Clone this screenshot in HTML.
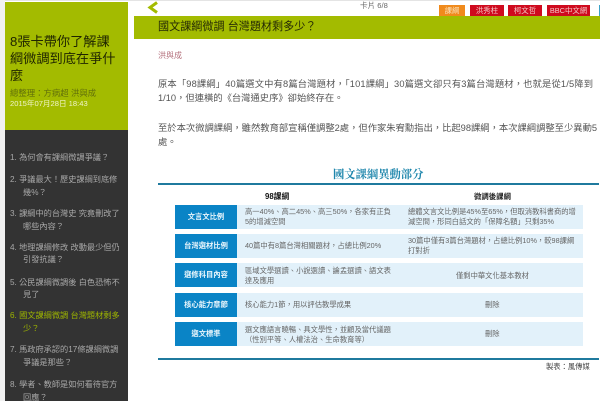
<!DOCTYPE html>
<html lang="zh-Hant">
<head>
<meta charset="utf-8">
<style>
html,body{margin:0;padding:0;width:600px;height:401px;overflow:hidden;background:#fff}
body{position:relative;font-family:"Liberation Sans","Noto Sans CJK TC",sans-serif}
#w{position:absolute;left:0;top:0;width:600px;height:401px;overflow:hidden;filter:blur(0.3px)}
.a{position:absolute;white-space:nowrap;display:block}
.b{position:absolute;display:block}
.m{font-size:8.2px;line-height:12px;color:#a8a8a8}
.t{font-size:9.3px;line-height:12px;color:#555}
.c{font-size:7.3px;line-height:9.5px;color:#666}
.l{position:absolute;left:175px;width:62px;height:24px;background:#0a84c6;color:#eaf6fc;font-size:7.3px;font-weight:bold;line-height:24px;text-align:center}
.r{position:absolute;left:237px;width:346px;height:24px;background:#e2f1fa}
.tab{position:absolute;top:5px;height:11px;background:#cf0a1e;color:#f4c8c8;font-size:7.4px;line-height:11px;text-align:center}
</style>
</head>
<body>
<div id="w">
<div class="b" style="left:0;top:0;width:600px;height:1px;background:#e4e4e4"></div>
<div class="b" style="left:0;top:0;width:5px;height:401px;background:#f1f1f1"></div>
<div class="b" style="left:5px;top:2px;width:123px;height:128px;background:#a3bb00"></div>
<div class="b" style="left:5px;top:130px;width:123px;height:271px;background:#333"></div>

<span class="a" style="left:10px;top:33px;font-size:13.2px;line-height:17px;color:#1f2400">8張卡帶你了解課<br>綱微調到底在爭什<br>麼</span>
<span class="a" style="left:10px;top:88px;font-size:8.4px;line-height:11px;color:#62700a">總整理：方病超 洪與成</span>
<span class="a" style="left:10px;top:99px;font-size:7.6px;line-height:10px;color:#f0f4c8">2015年07月28日 18:43</span>

<span class="a m" style="left:10px;top:152px">1. 為何會有課綱微調爭議？</span>
<span class="a m" style="left:10px;top:174px">2. 爭議最大！歷史課綱到底修</span>
<span class="a m" style="left:23px;top:187px">幾%？</span>
<span class="a m" style="left:10px;top:208px">3. 課綱中的台灣史 究竟刪改了</span>
<span class="a m" style="left:23px;top:221px">哪些內容？</span>
<span class="a m" style="left:10px;top:242px">4. 地理課綱修改 改動最少但仍</span>
<span class="a m" style="left:23px;top:254px">引發抗議？</span>
<span class="a m" style="left:10px;top:277px">5. 公民課綱微調後 白色恐怖不</span>
<span class="a m" style="left:23px;top:289px">見了</span>
<span class="a m" style="left:10px;top:310px;color:#9db400">6. 國文課綱微調 台灣題材剩多</span>
<span class="a m" style="left:23px;top:323px;color:#9db400">少？</span>
<span class="a m" style="left:10px;top:344px">7. 馬政府承認的17條課綱微調</span>
<span class="a m" style="left:23px;top:357px">爭議是那些？</span>
<span class="a m" style="left:10px;top:379px">8. 學者、教師是如何看待官方</span>
<span class="a m" style="left:23px;top:392px">回應？</span>

<svg class="b" style="left:146px;top:1px" width="14" height="13" viewBox="0 0 14 13"><path d="M11 1.5 L4 6.5 L11 11.5" fill="none" stroke="#a3bb00" stroke-width="3"/></svg>
<span class="a" style="left:360px;top:1px;font-size:7.6px;line-height:10px;color:#666">卡片 6/8</span>

<div class="b" style="left:134px;top:16px;width:466px;height:23px;background:#a3bb00"></div>
<span class="a" style="left:158px;top:19px;font-size:11.1px;line-height:16px;color:#252a05">國文課綱微調 台灣題材剩多少？</span>

<div class="tab" style="left:439px;width:26px;background:#f08a1c;color:#fbe0b8">課綱</div>
<div class="tab" style="left:470px;width:34px">洪秀柱</div>
<div class="tab" style="left:508px;width:34px">柯文哲</div>
<div class="tab" style="left:547px;width:43px">BBC中文網</div>
<div class="b" style="left:599px;top:5px;width:1px;height:11px;background:#3aa3c8"></div>

<span class="a" style="left:158px;top:50px;font-size:8px;line-height:11px;color:#b5727e">洪與成</span>

<span class="a t" style="left:158px;top:78px;letter-spacing:0.14px">原本「98課綱」40篇選文中有8篇台灣題材，「101課綱」30篇選文卻只有3篇台灣題材，也就是從1/5降到</span>
<span class="a t" style="left:158px;top:92px">1/10，但連橫的《台灣通史序》卻始終存在。</span>
<span class="a t" style="left:158px;top:122px">至於本次微調課綱，雖然教育部宣稱僅調整2處，但作家朱宥勳指出，比起98課綱，本次課綱調整至少異動5</span>
<span class="a t" style="left:158px;top:136px">處。</span>

<span class="a" style="left:333px;top:167px;font-family:'Noto Serif CJK SC','Liberation Serif',serif;font-weight:bold;font-size:11.3px;line-height:15px;color:#1e86ac">國文課綱異動部分</span>
<div class="b" style="left:158px;top:183px;width:441px;height:2px;background:#1f7a9e"></div>

<span class="a" style="left:265px;top:192px;font-size:7.8px;line-height:10px;font-weight:bold;color:#111">98課綱</span>
<span class="a" style="left:474px;top:192px;font-size:7.4px;line-height:10px;font-weight:bold;color:#222">微調後課綱</span>

<div class="r" style="top:205px"></div><div class="l" style="top:205px">文言文比例</div>
<div class="r" style="top:234px"></div><div class="l" style="top:234px">台灣選材比例</div>
<div class="r" style="top:263px"></div><div class="l" style="top:263px">選修科目內容</div>
<div class="r" style="top:293px"></div><div class="l" style="top:293px">核心能力章節</div>
<div class="r" style="top:322px"></div><div class="l" style="top:322px">選文標準</div>

<span class="a c" style="left:245px;top:207px">高一40%、高二45%、高三50%，各家有正負<br>5的增減空間</span>
<span class="a c" style="left:408px;top:207px">總體文言文比例是45%至65%，但取消教科書商的增<br>減空間，形同白話文的「保障名額」只剩35%</span>
<span class="a c" style="left:245px;top:241px">40篇中有8篇台灣相關題材，占總比例20%</span>
<span class="a c" style="left:408px;top:236px">30篇中僅有3篇台灣題材，占總比例10%，較98課綱<br>打對折</span>
<span class="a c" style="left:245px;top:266px">區域文學選讀、小說選讀、論孟選讀、語文表<br>達及應用</span>
<span class="a c" style="left:456px;top:271px">僅剩中華文化基本教材</span>
<span class="a c" style="left:245px;top:300px">核心能力1節，用以評估教學成果</span>
<span class="a c" style="left:485px;top:300px">刪除</span>
<span class="a c" style="left:245px;top:325px">選文應語言曉暢、具文學性，並顧及當代議題<br>（性別平等、人權法治、生命教育等）</span>
<span class="a c" style="left:485px;top:329px">刪除</span>

<div class="b" style="left:158px;top:358px;width:441px;height:1.5px;background:#1f7a9e"></div>
<span class="a" style="left:546px;top:362px;font-size:7.3px;line-height:10px;color:#444">製表：風傳媒</span>
</div>
</body>
</html>
